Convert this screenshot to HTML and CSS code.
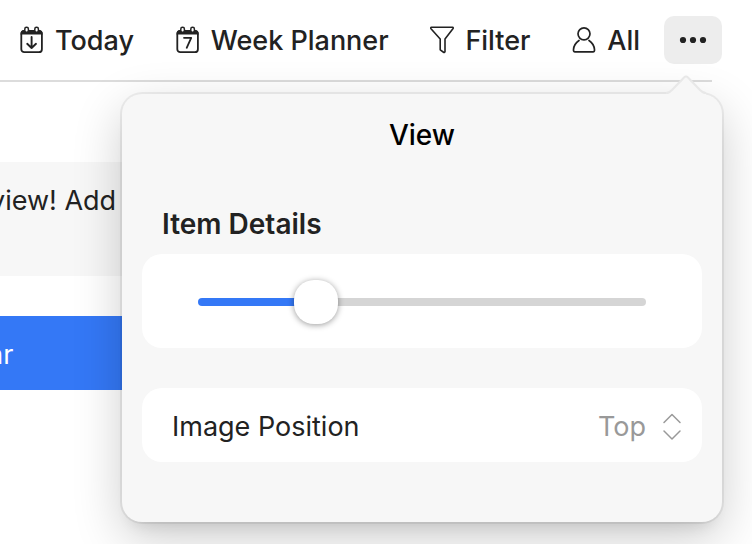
FILE: index.html
```html
<!DOCTYPE html>
<html lang="en">
<head>
<meta charset="utf-8">
<meta name="viewport" content="width=device-width, initial-scale=1">
<title>Planner</title>
<link rel="stylesheet" href="styles.css">
</head>
<body>
<header class="toolbar">
  <nav class="actions">
    <button class="action" type="button">
      <svg class="icon" width="24" height="28" viewBox="0 0 24 28" fill="none" stroke="currentColor" stroke-width="1.8" stroke-linecap="round" stroke-linejoin="round">
        <rect x="1.3" y="5" width="20.6" height="21.2" rx="3"/>
        <path d="M.5 8.500Q.5 4 4.500 4H18.500Q22.700 4 22.700 8.500Z" fill="currentColor" stroke="none"/>
        <rect x="4.800" y="1.300" width="3.600" height="5" rx="1.700" fill="#fff" stroke-width="1.500"/>
        <rect x="14.800" y="1.300" width="3.600" height="5" rx="1.700" fill="#fff" stroke-width="1.500"/>
        <path d="M11.600 11V22M7.200 17.800L11.600 22L16 17.800" stroke-width="1.900"/>
      </svg>
      <span>Today</span>
    </button>
    <button class="action" type="button">
      <svg class="icon" width="24" height="28" viewBox="0 0 24 28" fill="none" stroke="currentColor" stroke-width="1.8" stroke-linecap="round" stroke-linejoin="round">
        <rect x="1.3" y="5" width="20.6" height="21.2" rx="3"/>
        <path d="M.5 8.5Q.5 4 4.5 4H18.5Q22.7 4 22.7 8.5Z" fill="currentColor" stroke="none"/>
        <rect x="4.8" y="1.3" width="3.6" height="5" rx="1.7" fill="#fff" stroke-width="1.5"/>
        <rect x="14.8" y="1.3" width="3.6" height="5" rx="1.7" fill="#fff" stroke-width="1.5"/>
        <path d="M8 11.800H15.200L10.700 21.800" stroke-width="1.800"/>
      </svg>
      <span>Week Planner</span>
    </button>
    <button class="action" type="button">
      <svg class="icon" width="24" height="28" viewBox="0 0 24 28" fill="none" stroke="currentColor" stroke-width="1.6" stroke-linecap="round" stroke-linejoin="round">
        <path d="M1.500 1.300H22.500Q23.700 1.500 22.900 2.700L15 13V25.500Q14.600 27 13.200 26L10.200 23.800V13L1 2.700Q.2 1.500 1.500 1.300Z"/>
      </svg>
      <span>Filter</span>
    </button>
    <button class="action" type="button">
      <svg class="icon" width="24" height="28" viewBox="0 0 24 28" fill="none" stroke="currentColor" stroke-width="1.7" stroke-linecap="round" stroke-linejoin="round">
        <circle cx="12" cy="7.800" r="6"/>
        <path d="M7 14.500C4 16.500 1.800 20 1.500 23.500Q1.300 25.800 3 25.800H21Q22.700 25.800 22.500 23.500C22.200 20 20 16.500 17 14.500"/>
      </svg>
      <span>All</span>
    </button>
  </nav>
  <button class="more" type="button" aria-label="More">
    <svg width="28" height="8" viewBox="0 0 28 8" fill="currentColor"><circle cx="4" cy="4" r="3.100"/><circle cx="14" cy="4" r="3.100"/><circle cx="24" cy="4" r="3.100"/></svg>
  </button>
</header>

<main class="content">
  <p class="notice">view! Add</p>
  <button class="primary" type="button">ar</button>
</main>

<section class="popover" aria-labelledby="popover-title">
  <svg class="pointer" width="44" height="22" viewBox="0 0 44 22">
    <path d="M2 20C5 20 6 19 8 17L20 4.500Q22 2 24 4.500L36 17C38 19 39 20 42 20V22H2Z" fill="#f7f7f7"/>
    <path d="M2 19C5 19 6 18 8 16L20 3.500Q22 1.500 24 3.500L36 16C38 18 39 19 42 19" fill="none" stroke="#e8e8e8" stroke-width="2"/>
  </svg>
  <h1 class="title" id="popover-title">View</h1>
  <label class="group-label" for="details">Item Details</label>
  <div class="card slider-card">
    <input class="slider" id="details" type="range" min="0" max="80" value="19">
  </div>
  <div class="card row">
    <label for="position">Image Position</label>
    <span class="picker">
      <select id="position"><option>Top</option></select>
      <svg width="20" height="28" viewBox="0 0 20 28" fill="none" stroke="currentColor" stroke-width="1.500" stroke-linecap="round" stroke-linejoin="round"><path d="M2 9.500L10 1.500L18 9.500M2 18L10 26L18 18"/></svg>
    </span>
  </div>
</section>
</body>
</html>
```
FILE: styles.css
```css
* {
  box-sizing: border-box;
}

body {
  margin: 0;
  min-height: 100vh;
  position: relative;
  overflow: hidden;
  background: #fff;
  color: #222;
  font-family: Inter, "Liberation Sans", sans-serif;
  font-size: 27px;
  line-height: 34px;
}

button,
select {
  margin: 0;
  padding: 0;
  border: 0;
  background: none;
  color: inherit;
  font: inherit;
}

.toolbar {
  display: flex;
  align-items: center;
  gap: 24px;
  padding: 16px 30px 16px 20px;
}

.actions {
  display: flex;
  flex: 1;
  justify-content: space-between;
}

.action {
  display: flex;
  align-items: center;
  gap: 11px;
  font-weight: 500;
  line-height: 36px;
  white-space: nowrap;
}

.action span {
  padding-top: 2px;
}

.icon {
  flex: none;
}

.more {
  display: flex;
  align-items: center;
  justify-content: center;
  width: 58px;
  height: 48px;
  border-radius: 10px;
  background: #ededed;
}

.content {
  margin-right: 40px;
  padding-top: 80px;
  border-top: 2px solid #dcdcdc;
}

.notice {
  height: 114px;
  margin: 0 0 40px;
  padding-top: 22px;
  background: #f7f7f7;
  text-indent: -10px;
}

.primary {
  display: block;
  width: 100%;
  height: 74px;
  padding-top: 4px;
  background: #3478f6;
  color: #fff;
  text-align: left;
  text-indent: -12px;
}

.popover {
  position: absolute;
  top: 94px;
  left: 122px;
  right: 30px;
  padding: 24px 20px 60px;
  border-radius: 20px;
  background: #f7f7f7;
  box-shadow: 0 0 0 2px rgba(0, 0, 0, 0.06), 0 12px 16px -10px rgba(0, 0, 0, 0.12), 0 16px 50px rgba(0, 0, 0, 0.2);
}

.pointer {
  position: absolute;
  top: -20px;
  right: 14px;
}

.title {
  margin: 0 0 55px;
  color: #000;
  font-size: 28px;
  font-weight: 500;
  line-height: 34px;
  text-align: center;
}

.group-label {
  display: block;
  margin: 0 20px 13px;
  font-size: 28px;
  font-weight: 600;
}

.card {
  border-radius: 20px;
  background: #fff;
}

.slider-card {
  display: flex;
  margin-bottom: 40px;
  padding: 26px 56px 24px;
}

.slider {
  width: 100%;
  height: 44px;
  margin: 0;
  appearance: none;
  background: none;
}

.slider::-webkit-slider-runnable-track {
  height: 8px;
  border-radius: 4px;
  background: linear-gradient(to right, #3478f6 26%, #d5d5d5 26%);
}

.slider::-webkit-slider-thumb {
  width: 44px;
  height: 44px;
  margin-top: -18px;
  appearance: none;
  border-radius: 20px;
  background: #fff;
  box-shadow: 0 1px 6px rgba(0, 0, 0, 0.4);
}

.row {
  display: flex;
  align-items: center;
  justify-content: space-between;
  height: 74px;
  padding: 4px 20px 0 30px;
}

.picker {
  display: flex;
  align-items: center;
  gap: 15px;
  color: #999;
}

.picker select {
  appearance: none;
}
```
